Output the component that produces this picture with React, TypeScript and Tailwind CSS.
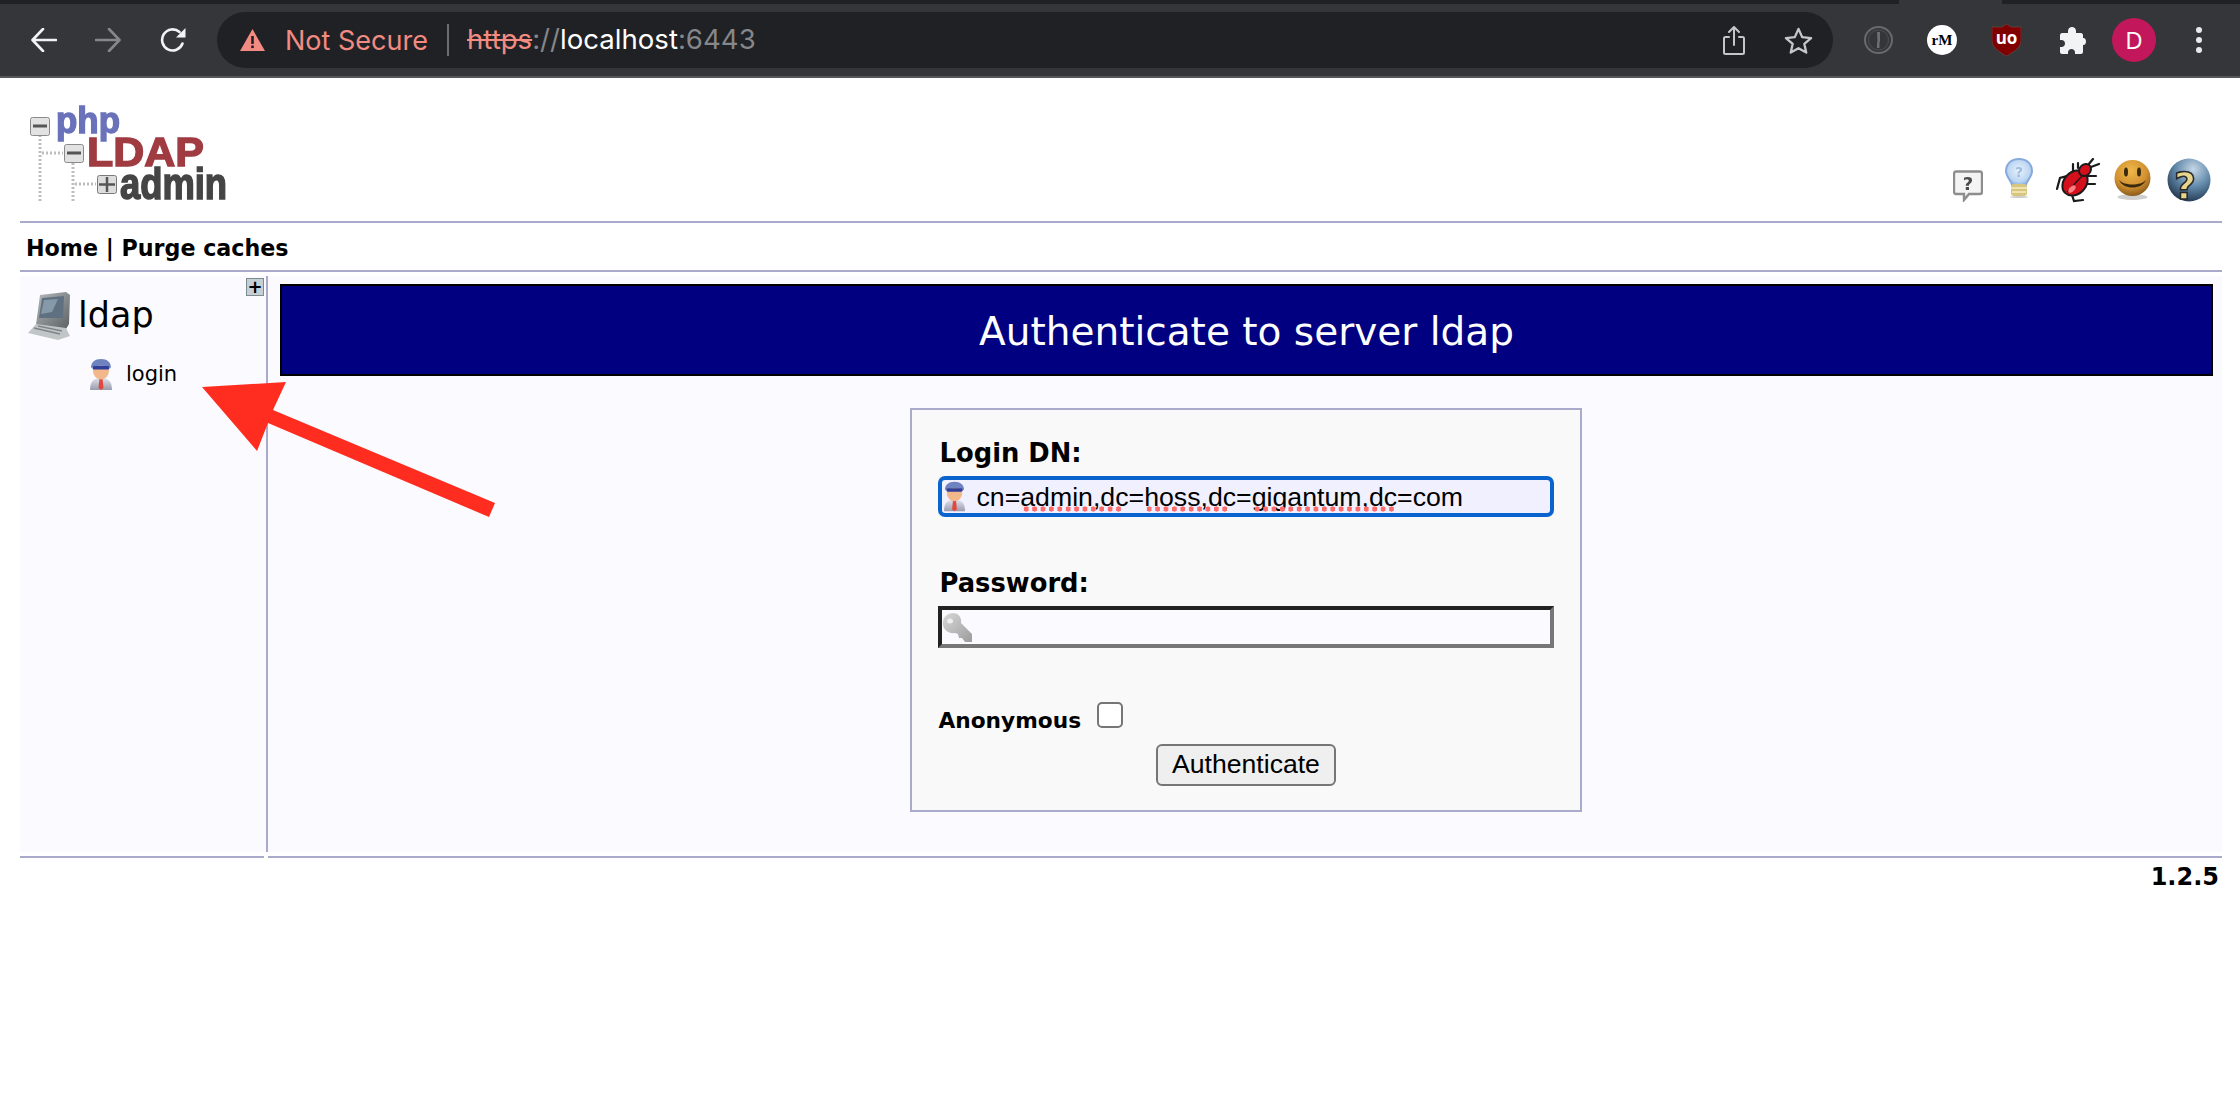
import React from "react";

const Person = ({ className }: { className?: string }) => (
  <svg viewBox="0 0 24 31" className={`${className} blur-[0.4px]`}>
    <defs>
      <linearGradient id="suit" x1="0" x2="0" y1="0" y2="1">
        <stop offset="0" stopColor="#dfe1ea" />
        <stop offset="1" stopColor="#9a9cae" />
      </linearGradient>
    </defs>
    <path d="M1 31 C1 22 5 19 12 19 C19 19 23 22 23 31 Z" fill="url(#suit)" />
    <path d="M10.5 19 L13.5 19 L14.5 29 L12 31 L9.5 29 Z" fill="#e2483f" />
    <ellipse cx="12" cy="12" rx="8" ry="8.5" fill="#f2b88c" />
    <path d="M2 9 C2 3 6 0 12 0 C18 0 22 3 22 9 C17 6 7 6 2 9 Z" fill="#6f82c0" />
    <rect x="3.5" y="7" width="17" height="3.5" rx="1.5" fill="#2f3f97" />
  </svg>
);

const Key = ({ className }: { className?: string }) => (
  <svg viewBox="0 0 31 30" className={className}>
    <defs>
      <linearGradient id="keyg" x1="0" x2="1" y1="0" y2="1">
        <stop offset="0" stopColor="#d8d8d8" />
        <stop offset="1" stopColor="#9c9c9c" />
      </linearGradient>
    </defs>
    <path d="M11 0 C16 0 20 4 19 10 L30 21 L30 29 L23 29 L20 25 L17 25 L16 21 L13 20 C6 21 0 16 1 9 C1 4 6 0 11 0 Z" fill="url(#keyg)" />
    <ellipse cx="8" cy="8" rx="3" ry="2.5" fill="#eeeeee" />
  </svg>
);

const Logo = () => (
  <svg viewBox="0 0 200 96" className="w-[200px] h-[96px] blur-[0.6px] overflow-visible">
    <g stroke="#bdbdbd" strokeWidth="3" strokeDasharray="2 2" fill="none">
      <path d="M10 27 V94" />
      <path d="M43 55 V94" />
      <path d="M12 45 H33" />
      <path d="M45 76 H66" />
    </g>
    <g fontFamily="'Liberation Sans', sans-serif" fontWeight="700">
      <text x="26" y="25" fontSize="36" fill="#6a72ba" stroke="#6a72ba" strokeWidth="1.4" textLength="64" lengthAdjust="spacingAndGlyphs">php</text>
      <text x="57" y="58" fontSize="40" fill="#a03b41" stroke="#a03b41" strokeWidth="1.4" textLength="117" lengthAdjust="spacingAndGlyphs">LDAP</text>
      <text x="90" y="91" fontSize="44" fill="#454545" stroke="#454545" strokeWidth="1.6" textLength="107" lengthAdjust="spacingAndGlyphs">admin</text>
    </g>
    {[[0, 9], [34, 36]].map(([x, y]) => (
      <g key={x}>
        <rect x={x + 0.5} y={y + 0.5} width="19" height="18" rx="2" fill="#e2e2e2" stroke="#8a8a8a" />
        <rect x={x + 3} y={y + 7.5} width="14" height="3" fill="#555555" />
      </g>
    ))}
    <rect x="67.5" y="67.5" width="19" height="18" rx="2" fill="#dddddd" stroke="#7a7a7a" />
    <path d="M77 69 V84 M69 76.5 H85" stroke="#555555" strokeWidth="2.5" />
  </svg>
);

const Bubble = () => (
  <svg viewBox="0 0 30 32" className="w-[30px] h-[32px] mb-[1px] blur-[0.5px]">
    <path d="M3 1.5 H27 C28 1.5 29 2.5 29 4 V22 C29 23 28 24 27 24 H16 L11 30 L11 24 H3 C2 24 1 23 1 22 V4 C1 2.5 2 1.5 3 1.5 Z" fill="#f4f4f4" stroke="#8d8d8d" strokeWidth="2.4" />
    <text x="15" y="20" textAnchor="middle" fontSize="18" fontWeight="700" fill="#4a4a4a" fontFamily="'DejaVu Sans', sans-serif">?</text>
  </svg>
);

const Bulb = () => (
  <svg viewBox="0 0 28 40" className="w-[28px] h-[40px] mb-[5px] blur-[0.5px]">
    <defs>
      <radialGradient id="bulbg" cx="0.5" cy="0.45" r="0.6">
        <stop offset="0" stopColor="#e8f2fc" />
        <stop offset="0.7" stopColor="#bcd6f2" />
        <stop offset="1" stopColor="#7ea6d8" />
      </radialGradient>
    </defs>
    <path d="M14 1 C22 1 27 6 27 13 C27 19 22 22 21 27 H7 C6 22 1 19 1 13 C1 6 6 1 14 1 Z" fill="url(#bulbg)" stroke="#86aadc" strokeWidth="2" />
    <text x="14" y="19" textAnchor="middle" fontSize="14" fontWeight="700" fill="#9fbde0" fontFamily="'DejaVu Sans', sans-serif">?</text>
    <rect x="6" y="26" width="16" height="12" rx="3" fill="#d8c67c" />
    <path d="M6 30 H22 M7 34 H21" stroke="#f3ecc4" strokeWidth="1.5" />
    <ellipse cx="14" cy="39" rx="9" ry="1" fill="#cccccc" />
  </svg>
);

const Bug = () => (
  <svg viewBox="0 0 45 45" className="w-[45px] h-[45px] blur-[0.3px]">
    <g stroke="#1a1a1a" strokeWidth="2.2" fill="none" strokeLinecap="round">
      <path d="M12 18 L5 20 L2 31" />
      <path d="M18 13 L18 6" />
      <path d="M23 10 L23 5" />
      <path d="M30 18 L41 18" />
      <path d="M30 26 L40 26" />
      <path d="M36 9 L44 6" />
      <path d="M33 7 L38 1" />
      <path d="M16 34 L19 43 L28 42" />
    </g>
    <ellipse cx="20" cy="25" rx="14" ry="11" transform="rotate(-45 20 25)" fill="#d3101c" stroke="#1a1a1a" strokeWidth="2" />
    <ellipse cx="30" cy="12" rx="6.5" ry="5.5" transform="rotate(-45 30 12)" fill="#d3101c" stroke="#1a1a1a" strokeWidth="2" />
    <path d="M12 34 L28 17" stroke="#1a1a1a" strokeWidth="1.2" />
    <ellipse cx="17" cy="31" rx="4.5" ry="2.5" transform="rotate(-45 17 31)" fill="#ff7d82" />
  </svg>
);

const Smile = () => (
  <svg viewBox="0 0 37 40" className="w-[37px] h-[40px] mb-[3px] blur-[0.3px]">
    <defs>
      <radialGradient id="smg" cx="0.45" cy="0.3" r="0.75">
        <stop offset="0" stopColor="#eeb84a" />
        <stop offset="0.6" stopColor="#d29030" />
        <stop offset="1" stopColor="#7d5218" />
      </radialGradient>
    </defs>
    <ellipse cx="18.5" cy="37" rx="15" ry="3" fill="#cfcfcf" />
    <circle cx="18.5" cy="18" r="18" fill="url(#smg)" />
    <ellipse cx="12" cy="12" rx="2" ry="4.5" fill="#3a2a10" />
    <ellipse cx="25" cy="12" rx="2" ry="4.5" fill="#3a2a10" />
    <path d="M5 20 C9 30 28 30 32 20 C27 26 10 26 5 20 Z" fill="#3a2a10" />
  </svg>
);

const Help = () => (
  <svg viewBox="0 0 44 46" className="w-[44px] h-[46px] blur-[0.3px]">
    <defs>
      <radialGradient id="hpg" cx="0.6" cy="0.25" r="0.85">
        <stop offset="0" stopColor="#c4d7e6" />
        <stop offset="0.5" stopColor="#5f86a8" />
        <stop offset="1" stopColor="#16283c" />
      </radialGradient>
    </defs>
    <circle cx="22" cy="23" r="21.5" fill="url(#hpg)" />
    <text x="18" y="42" textAnchor="middle" fontSize="38" fontWeight="700" fill="#e8d68f" stroke="#2a2a2a" strokeWidth="1.6" fontFamily="'DejaVu Sans', sans-serif">?</text>
  </svg>
);

const Computer = () => (
  <svg viewBox="0 0 42 48" className="w-[42px] h-[48px] blur-[0.5px]">
    <defs>
      <linearGradient id="cmpg" x1="0" x2="1" y1="0" y2="1">
        <stop offset="0" stopColor="#b4babc" />
        <stop offset="1" stopColor="#5c6063" />
      </linearGradient>
    </defs>
    <path d="M12 3 L38 0 L42 3 L41 32 L38 37 L8 33 Z" fill="url(#cmpg)" />
    <path d="M14 6 L36 4 L35 26 L11 26 Z" fill="#5f7180" />
    <path d="M16 8 L30 7 L24 20 L13 22 Z" fill="#8699a8" />
    <path d="M8 32 L38 36 L42 44 L30 48 L0 41 Z" fill="#c0c5c6" />
    <path d="M6 36 L32 42 M10 34 L34 39" stroke="#7f8488" strokeWidth="1.5" />
  </svg>
);

const Chevron = ({ dir, className }: { dir: "l" | "r"; className?: string }) => (
  <svg viewBox="0 0 26 24" className={className} fill="none" stroke="currentColor" strokeWidth="2.6" strokeLinecap="round" strokeLinejoin="round">
    {dir === "l" ? <path d="M25 12 H2 M12 1 L1.5 12 L12 23" /> : <path d="M1 12 H24 M14 1 L24.5 12 L14 23" />}
  </svg>
);

export default function App() {
  return (
    <div className="relative min-h-screen bg-white font-['DejaVu_Sans',sans-serif] text-black overflow-hidden">
      {/* browser toolbar */}
      <header className="bg-[#35363a] h-[78px] border-b-2 border-[#55565a] font-['Inter',sans-serif]">
        <div className="flex h-[4px]">
          <div className="w-[1899px] bg-[#202124]" />
          <div className="w-[103px]" />
          <div className="flex-1 bg-[#202124]" />
        </div>
        <div className="flex items-center h-[72px] pl-[31px]">
          <Chevron dir="l" className="w-[26px] h-[24px] text-[#f1f3f4]" />
          <Chevron dir="r" className="w-[26px] h-[24px] ml-[38px] text-[#85878a]" />
          <svg viewBox="0 0 26 26" className="w-[26px] h-[26px] ml-[39px]" fill="none">
            <path d="M22.5 16.5 A10.5 10.5 0 1 1 19.5 5" stroke="#f1f3f4" strokeWidth="2.6" strokeLinecap="round" />
            <path d="M25.5 1 V10.5 H16 Z" fill="#f1f3f4" />
          </svg>
          <div className="flex items-center h-[56px] w-[1616px] ml-[31px] rounded-[28px] bg-[#202124] pl-[23px] pr-[20px]">
            <svg viewBox="0 0 25 22" className="w-[25px] h-[22px]">
              <path d="M12.5 0 L25 22 H0 Z" fill="#f28b82" />
              <rect x="11.2" y="7" width="2.6" height="8" fill="#202124" />
              <rect x="11.2" y="16.5" width="2.6" height="2.6" fill="#202124" />
            </svg>
            <span className="ml-[20px] text-[27px] text-[#f28b82] leading-none w-[145px] whitespace-nowrap">Not Secure</span>
            <span className="ml-[17px] w-[2px] h-[32px] bg-[#6b6c70]" />
            <span className="ml-[18px] text-[27.6px] leading-none whitespace-nowrap">
              <span className="text-[#f28b82] line-through">https</span>
              <span className="text-[#85878a]">://</span>
              <span className="text-white">localhost</span>
              <span className="text-[#85878a]">:6443</span>
            </span>
            <div className="ml-auto flex items-center gap-[39px]">
              <svg viewBox="0 0 22 29" className="w-[22px] h-[29px]" fill="none" stroke="#c4c6c9" strokeWidth="2" strokeLinecap="round" strokeLinejoin="round">
                <path d="M6 11 H2.5 C1.5 11 1 11.5 1 12.5 V26.5 C1 27.5 1.5 28 2.5 28 H19.5 C20.5 28 21 27.5 21 26.5 V12.5 C21 11.5 20.5 11 19.5 11 H16" />
                <path d="M11 19 V1.5 M6 6 L11 1 L16 6" />
              </svg>
              <svg viewBox="0 0 30 28" className="w-[29px] h-[28px]" fill="none" stroke="#c4c6c9" strokeWidth="2.4" strokeLinejoin="round">
                <path d="M15 2.5 L18.8 11 L28 12 L21 18 L23 27 L15 22.5 L7 27 L9 18 L2 12 L11.2 11 Z" />
              </svg>
            </div>
          </div>
          <svg viewBox="0 0 29 28" className="w-[29px] h-[28px] ml-[31px]" fill="none">
            <ellipse cx="14.5" cy="14" rx="13.5" ry="13" stroke="#68696c" strokeWidth="2" />
            <ellipse cx="14.5" cy="14" rx="10" ry="10" stroke="#4e4f52" strokeWidth="1" />
            <path d="M13 6 H16 V15 L15.5 17 V22 H13 V17 L13.5 15 Z" fill="#6e6f72" />
          </svg>
          <div className="w-[30px] h-[30px] ml-[34px] rounded-full bg-white flex items-center justify-center font-['Liberation_Serif',serif] font-bold text-[15px] text-black leading-none">rM</div>
          <div className="relative ml-[35px] w-[29px] h-[32px] flex items-center justify-center">
            <svg viewBox="0 0 29 32" className="absolute inset-0 w-[29px] h-[32px]">
              <path d="M14.5 0 L19 3 H29 V17 C29 24 20 29 14.5 32 C9 29 0 24 0 17 V3 H10 Z" fill="#800000" stroke="#6b5050" strokeWidth="0.6" />
            </svg>
            <span className="relative text-white text-[17px] font-bold leading-none font-['Open_Sans',sans-serif] mb-[5px]">uo</span>
          </div>
          <svg viewBox="0 0 29 27" className="w-[29px] h-[27px] ml-[36px]">
            <path d="M11 4 C11 1.5 13 0 15 0 C17 0 19 1.5 19 4 V6 H24 C25 6 26 7 26 8 V11 H26.5 C28 11 29 12.5 29 14.5 C29 16.5 28 18 26.5 18 H26 V25 C26 26 25 27 24 27 H18 V25.5 C18 23.5 16.5 22 14.5 22 C12.5 22 11 23.5 11 25.5 V27 H5 C4 27 3 26 3 25 V20 H4.5 C6.5 20 8 18.5 8 16.5 C8 14.5 6.5 13 4.5 13 H3 V8 C3 7 4 6 5 6 H11 Z" fill="#f1f3f4" />
          </svg>
          <div className="ml-[26px] w-[44px] h-[44px] rounded-full bg-[#c2185b] flex items-center justify-center text-white text-[24px] font-['Open_Sans',sans-serif] leading-none">D</div>
          <div className="ml-[40px] flex flex-col gap-[4px]">
            <span className="w-[6px] h-[6px] rounded-full bg-[#e8eaed]" />
            <span className="w-[6px] h-[6px] rounded-full bg-[#e8eaed]" />
            <span className="w-[6px] h-[6px] rounded-full bg-[#e8eaed]" />
          </div>
        </div>
      </header>

      {/* page */}
      <div className="pl-[20px] pr-[18px]">
        <div className="flex justify-between items-end h-[145px] border-b-2 border-[#aaaacc]">
          <div className="self-start mt-[30px] ml-[10px]">
            <Logo />
          </div>
          <div className="flex items-end mr-[11px] mb-[18px]">
            <Bubble />
            <div className="ml-[22px]"><Bulb /></div>
            <div className="ml-[22px] flex"><Bug /></div>
            <div className="ml-[14px] flex"><Smile /></div>
            <div className="ml-[16px] flex"><Help /></div>
          </div>
        </div>
        <nav className="flex items-center h-[49px] pl-[6px] pt-[3px] border-b-2 border-[#aaaacc] font-bold text-[22.2px] leading-none">
          Home | Purge caches
        </nav>

        <main className="flex h-[576px] mt-[4px] bg-[#fbfbff]">
          <aside className="relative w-[248px] shrink-0 border-r-2 border-[#aaaacc]">
            <button className="absolute right-[2px] top-[2px] w-[18px] h-[18px] bg-[#c4d0d4] border border-[#7d8a90] flex items-center justify-center text-black font-bold text-[18px] leading-none">+</button>
            <div className="flex items-center pt-[16px] pl-[8px]">
              <Computer />
              <span className="ml-[8px] mb-[2px] text-[35px] leading-none">ldap</span>
            </div>
            <div className="flex items-center mt-[19px] pl-[69px]">
              <Person className="w-[24px] h-[31px]" />
              <span className="ml-[13px] text-[21px] leading-none">login</span>
            </div>
          </aside>

          <section className="flex-1 pt-[8px] pl-[12px] pr-[9px]">
            <div className="h-[92px] pt-[2px] border-2 border-black bg-[#000080] text-white flex items-center justify-center text-[39px] leading-none">
              Authenticate to server ldap
            </div>
            <form className="relative -left-[1px] mx-auto mt-[32px] w-[672px] h-[404px] border-2 border-[#aaaacc] bg-[#f9f9f9] pl-[26px] pr-[26px] pt-[26px]">
              <label className="block font-bold text-[25.8px] leading-[34px] pl-[2px]">Login DN:</label>
              <div className="relative mt-[6px] h-[41px] w-[616px]">
                <input
                  readOnly
                  value="cn=admin,dc=hoss,dc=gigantum,dc=com"
                  className="w-full h-full rounded-[7px] border-[4px] border-[#0b63ce] bg-[#f0f0ff] pl-[35px] pt-[1px] font-['Liberation_Sans',sans-serif] text-[26.7px] text-black outline-none"
                />
                <Person className="absolute left-[5px] top-[5px] w-[23px] h-[31px]" />
                <div className="absolute left-[84px] top-[30px] w-[101px] h-[6px] bg-[radial-gradient(circle,#ff6b6b_2.4px,transparent_2.8px)] bg-[length:8.4px_6px]" />
                <div className="absolute left-[207px] top-[30px] w-[85px] h-[6px] bg-[radial-gradient(circle,#ff6b6b_2.4px,transparent_2.8px)] bg-[length:8.4px_6px]" />
                <div className="absolute left-[315px] top-[30px] w-[142px] h-[6px] bg-[radial-gradient(circle,#ff6b6b_2.4px,transparent_2.8px)] bg-[length:8.4px_6px]" />
              </div>
              <label className="block mt-[49px] font-bold text-[25.8px] leading-[34px] pl-[2px]">Password:</label>
              <div className="relative mt-[6px] h-[42px] w-[616px]">
                <input
                  readOnly
                  type="password"
                  className="w-full h-full border-[4px] border-t-[#222222] border-l-[#222222] border-b-[#777777] border-r-[#777777] bg-[#fbfbff] outline-none"
                />
                <Key className="absolute left-[4px] top-[7px] w-[31px] h-[30px]" />
              </div>
              <div className="flex items-start mt-[54px] pl-[1px]">
                <span className="mt-[8px] font-bold text-[21.7px] leading-none">Anonymous</span>
                <input type="checkbox" className="ml-[16px] w-[26px] h-[26px] appearance-none rounded-[5px] border-2 border-[#767676] bg-white" />
              </div>
              <div className="flex mt-[12px] pl-[218px]">
                <button type="button" className="w-[180px] h-[42px] pl-[1px] rounded-[6px] border-2 border-[#767676] bg-[#efefef] font-['Liberation_Sans',sans-serif] text-[26.6px] leading-none text-black">
                  Authenticate
                </button>
              </div>
            </form>
          </section>
        </main>

        <footer className="mt-[4px]">
          <div className="flex gap-[4px]">
            <div className="w-[244px] h-[2px] bg-[#aaaacc]" />
            <div className="flex-1 h-[2px] bg-[#aaaacc]" />
          </div>
          <div className="pt-[7px] pr-[3px] text-right font-bold text-[24px] leading-none">1.2.5</div>
        </footer>
      </div>

      {/* red annotation arrow */}
      <svg className="absolute left-0 top-0 w-[2240px] h-[1100px] pointer-events-none" viewBox="0 0 2240 1100">
        <path d="M202 387 L286 382 L273 410 L495 503 L489 517 L268 423 L257 451 Z" fill="#ff2d20" />
      </svg>
    </div>
  );
}
